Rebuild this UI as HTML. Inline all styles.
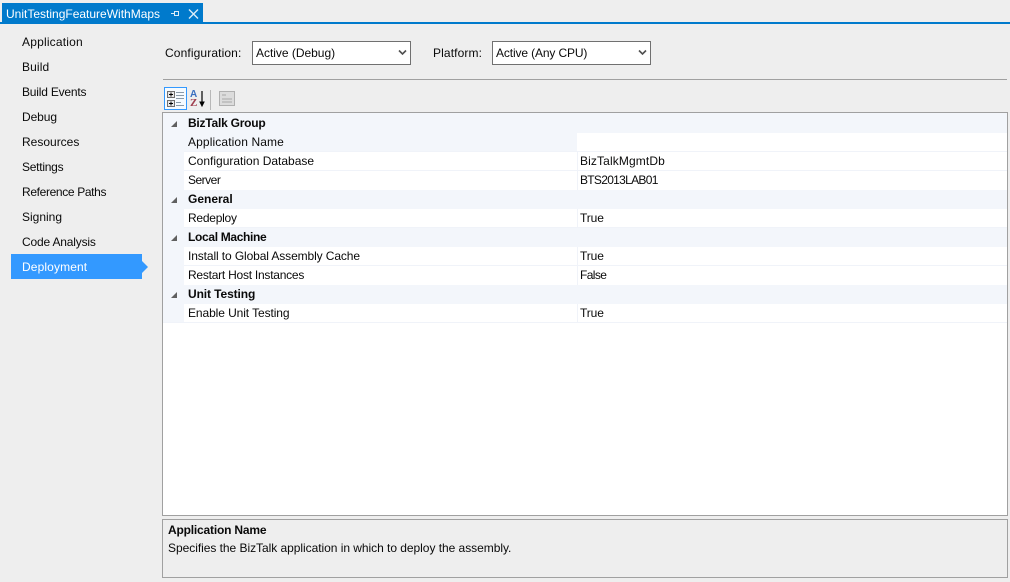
<!DOCTYPE html>
<html><head><meta charset="utf-8"><style>
html,body{margin:0;padding:0}
body{width:1010px;height:582px;background:#eeeeee;position:relative;overflow:hidden;font-family:"Liberation Sans",sans-serif;font-size:12px;color:#0a0a0a}
.a{position:absolute;white-space:nowrap}
.t{line-height:16px;height:16px}
.nav{left:22px;letter-spacing:.12px}
.row{left:163px;width:844px;height:19px;background:#fff;border-bottom:0}
.cat{background:#f3f6fb}
.line{left:184px;width:823px;height:1px;background:#f0f3f9}
.n{left:188px;letter-spacing:0}
.b{font-weight:bold}
.v{left:580px;letter-spacing:.12px}
.sel{background:#fff;border:1px solid #707070;box-sizing:border-box;height:24px;top:41px}
</style></head><body>
<div class="a" style="left:2px;top:3px;width:201px;height:20px;background:#007acc"></div>
<div class="a" style="left:0;top:22px;width:1010px;height:2px;background:#007acc"></div>
<div class="a t" style="left:6px;top:6px;color:#fff;letter-spacing:0">UnitTestingFeatureWithMaps</div>
<svg class="a" style="left:168px;top:7px" width="36" height="14" viewBox="0 0 36 14"><path d="M3 6.5H6M6.5 4V9M6.5 4.5H10.5V8.5H6.5" fill="none" stroke="#dcecf8" stroke-width="1"/><path d="M21 2.5L30 11.5M30 2.5L21 11.5" stroke="#dcecf8" stroke-width="1.4" fill="none"/></svg>

<div class="a t nav" style="top:34px;letter-spacing:.2px">Application</div>
<div class="a t nav" style="top:59px">Build</div>
<div class="a t nav" style="top:84px;letter-spacing:-.2px">Build Events</div>
<div class="a t nav" style="top:109px;letter-spacing:-.08px">Debug</div>
<div class="a t nav" style="top:134px;letter-spacing:0">Resources</div>
<div class="a t nav" style="top:159px;letter-spacing:-.25px">Settings</div>
<div class="a t nav" style="top:184px;letter-spacing:-.35px">Reference Paths</div>
<div class="a t nav" style="top:209px;letter-spacing:0">Signing</div>
<div class="a t nav" style="top:234px;letter-spacing:-.18px">Code Analysis</div>
<div class="a" style="left:11px;top:254px;width:131px;height:25px;background:#3399ff"></div>
<div class="a" style="left:142px;top:261px;width:0;height:0;border-left:6px solid #3399ff;border-top:6px solid transparent;border-bottom:6px solid transparent"></div>
<div class="a t nav" style="top:259px;color:#fff">Deployment</div>

<div class="a t" style="left:165px;top:45px;letter-spacing:.12px">Configuration:</div>
<div class="a sel" style="left:252px;width:159px"></div>
<div class="a t" style="left:256px;top:45px;letter-spacing:-.02px">Active (Debug)</div>
<svg class="a" style="left:398px;top:49px" width="10" height="8"><path d="M1 1.5L4.5 5L8 1.5" fill="none" stroke="#505050" stroke-width="1.6"/></svg>
<div class="a t" style="left:433px;top:45px;letter-spacing:.12px">Platform:</div>
<div class="a sel" style="left:492px;width:159px"></div>
<div class="a t" style="left:496px;top:45px;letter-spacing:-.13px">Active (Any CPU)</div>
<svg class="a" style="left:638px;top:49px" width="10" height="8"><path d="M1 1.5L4.5 5L8 1.5" fill="none" stroke="#505050" stroke-width="1.6"/></svg>
<div class="a" style="left:163px;top:79px;width:844px;height:1px;background:#a0a0a0"></div>

<div class="a" style="left:164px;top:87px;width:23px;height:23px;box-sizing:border-box;border:1px solid #3399ff;background:#f6fbff"></div>
<svg class="a" style="left:164px;top:87px" width="76" height="24" viewBox="0 0 76 24">
<rect x="3.5" y="4.5" width="7" height="6" fill="#e8e8e8" stroke="#707070"/><path d="M5 7.5H9M7 5.5V9.5" stroke="#000"/>
<rect x="3.5" y="13.5" width="7" height="6" fill="#e8e8e8" stroke="#707070"/><path d="M5 16.5H9M7 14.5V18.5" stroke="#000"/>
<path d="M12 5.5H20M12 8.5H20M12 11.5H20" stroke="#8a9aa8"/><path d="M12 15.5H17M12 18.5H20" stroke="#8a9aa8"/>
<path d="M38 4V18" stroke="#000" stroke-width="1.2"/><path d="M36 15L38 19L40 15Z" fill="#000" stroke="#000"/>
<rect x="46" y="3" width="1" height="20" fill="#b8b8b8"/>
<rect x="55.5" y="4.5" width="15" height="14" fill="#dcdcdc" stroke="#b0b0b0"/><path d="M58 8H62M58 12H68M58 15H68" stroke="#a8a8a8"/>
</svg>
<div class="a" style="left:190px;top:90px;font-size:10px;line-height:10px;font-weight:bold;color:#3a6fc0">A</div>
<div class="a" style="left:190px;top:98px;font-size:11px;line-height:10px;font-weight:bold;font-family:'Liberation Serif',serif;color:#a04050">Z</div>

<div class="a" style="left:162px;top:112px;width:846px;height:404px;box-sizing:border-box;border:1px solid #a0a0a0;background:#fff"></div>
<div class="a" style="left:163px;top:113px;width:21px;height:209px;background:#f3f6fb"></div>
<div class="a row cat" style="top:113px;height:20px"></div>
<div class="a row cat" style="top:133px;width:414px"></div>
<div class="a row cat" style="top:190px"></div>
<div class="a row cat" style="top:228px"></div>
<div class="a row cat" style="top:285px"></div>
<div class="a line" style="top:151px"></div>
<div class="a line" style="top:170px"></div>
<div class="a line" style="top:227px"></div>
<div class="a line" style="top:265px"></div>
<div class="a line" style="top:322px"></div>
<div class="a line" style="top:322px;left:163px;width:21px"></div>
<div class="a" style="left:577px;top:152px;width:1px;height:38px;background:#f0f3f9"></div>
<div class="a" style="left:577px;top:209px;width:1px;height:19px;background:#f0f3f9"></div>
<div class="a" style="left:577px;top:247px;width:1px;height:38px;background:#f0f3f9"></div>
<div class="a" style="left:577px;top:304px;width:1px;height:19px;background:#f0f3f9"></div>

<svg class="a" style="left:170px;top:118px" width="10" height="200" viewBox="0 0 10 200">
<path d="M1 9H7V3Z" fill="#606060"/><path d="M1 85H7V79Z" fill="#606060"/><path d="M1 123H7V117Z" fill="#606060"/><path d="M1 180H7V174Z" fill="#606060"/>
</svg>

<div class="a t n b" style="top:115px;letter-spacing:-.23px">BizTalk Group</div>
<div class="a t n" style="top:134px;letter-spacing:.12px">Application Name</div>
<div class="a t n" style="top:153px">Configuration Database</div>
<div class="a t n" style="top:172px;letter-spacing:-.5px">Server</div>
<div class="a t n b" style="top:191px">General</div>
<div class="a t n" style="top:210px;letter-spacing:-.25px">Redeploy</div>
<div class="a t n b" style="top:229px;letter-spacing:-.33px">Local Machine</div>
<div class="a t n" style="top:248px;letter-spacing:-.11px">Install to Global Assembly Cache</div>
<div class="a t n" style="top:267px;letter-spacing:-.24px">Restart Host Instances</div>
<div class="a t n b" style="top:286px;letter-spacing:-.1px">Unit Testing</div>
<div class="a t n" style="top:305px;letter-spacing:-.09px">Enable Unit Testing</div>
<div class="a t v" style="top:153px">BizTalkMgmtDb</div>
<div class="a t v" style="top:172px;letter-spacing:-.7px">BTS2013LAB01</div>
<div class="a t v" style="top:210px;letter-spacing:-.1px">True</div>
<div class="a t v" style="top:248px;letter-spacing:-.1px">True</div>
<div class="a t v" style="top:267px;letter-spacing:-.6px">False</div>
<div class="a t v" style="top:305px;letter-spacing:-.1px">True</div>

<div class="a" style="left:162px;top:519px;width:846px;height:59px;box-sizing:border-box;border:1px solid #a0a0a0;background:#eeeeee"></div>
<div class="a t b" style="left:168px;top:522px;letter-spacing:-.19px">Application Name</div>
<div class="a t" style="left:168px;top:540px;letter-spacing:-.04px">Specifies the BizTalk application in which to deploy the assembly.</div>
</body></html>
